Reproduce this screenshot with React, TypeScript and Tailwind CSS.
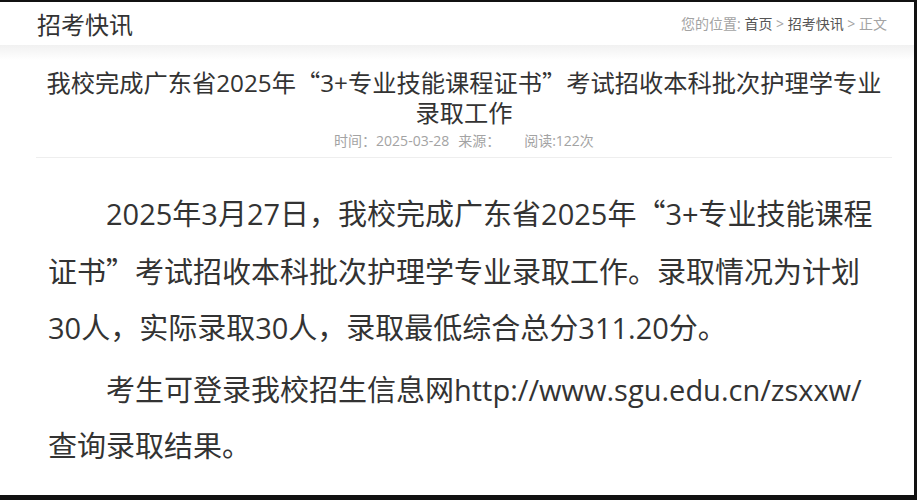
const SANS = "font-['Open_Sans','Noto_Sans_CJK_SC',sans-serif]";
const CJK = "font-['Noto_Sans_CJK_SC',sans-serif]";

// full-width CJK quotes, the latin face draws them too narrow
function Q({ children }: { children: string }) {
  return <span className={CJK}>{children}</span>;
}

function Breadcrumb() {
  return (
    <div className="text-[14px] text-[#a3a3a3]">
      您的位置: <a className="text-[#555]">首页</a> &gt;{" "}
      <a className="text-[#555]">招考快讯</a> &gt; 正文
    </div>
  );
}

export default function App() {
  return (
    <div className={`w-[917px] h-[500px] bg-[#111] pt-[2px] pr-[3px] pb-[5px] ${SANS}`}>
      <div className="flex h-full flex-col overflow-hidden bg-white">
        <header className="flex h-[43px] items-center justify-between pl-[37px] pr-[27px]">
          <h2 className={`text-[24px] text-[#333] ${CJK}`}>招考快讯</h2>
          <Breadcrumb />
        </header>
        <div className="h-[15px] bg-gradient-to-b from-[#f1f1f1] to-white" />

        <article className="mx-[36px] mr-[22px]">
          <div className="border-b border-[#eee] pb-[6px]">
            <h1 className="mt-[7px] text-center text-[24.25px] leading-[30px] text-[#333]">
              我校完成广东省2025年<Q>“</Q>3+专业技能课程证书<Q>”</Q>考试招收本科批次护理学专业录取工作
            </h1>
            <p className="mt-[3px] text-center text-[14px] leading-[20px] text-[#a3a3a3]">
              <span>时间：2025-03-28</span>
              <span className="ml-[9px]">来源：</span>
              <span className="ml-[24px]">阅读:122次</span>
            </p>
          </div>

          <div className="px-3 pt-[26px] text-[29px] leading-[56px] text-[#333]">
            <p className="indent-[2em]">
              2025年3月27日，我校完成广东省2025年<Q>“</Q>3+专业技能课程证书<Q>”</Q>考试招收本科批次护理学专业录取工作。录取情况为计划30人，实际录取30人，录取最低综合总分311.20分。
            </p>
            <p className="mt-[6px] indent-[2em]">
              考生可登录我校招生信息网http://www.sgu.edu.cn/zsxxw/查询录取结果。
            </p>
          </div>
        </article>
      </div>
    </div>
  );
}
